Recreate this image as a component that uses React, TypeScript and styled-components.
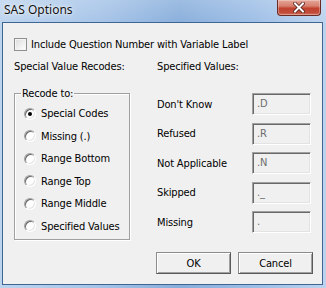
import React from "react";
import styled, { createGlobalStyle } from "styled-components";

const GlobalStyle = createGlobalStyle`
  html, body { margin: 0; padding: 0; }
  body { width: 326px; height: 288px; overflow: hidden; background: #fff; }
  *, *::before, *::after { box-sizing: border-box; }
`;

const UI_FONT = `"DejaVu Sans Condensed", "Liberation Sans", sans-serif`;

const Window = styled.div`
  width: 326px;
  height: 288px;
  display: flex;
  flex-direction: column;
  padding: 0 3px 3px 2px;
  background:
    linear-gradient(to bottom, rgba(255, 255, 255, 0.18), rgba(255, 255, 255, 0) 26px),
    linear-gradient(to right, #bdd4ee 0%, #a6c4e8 30%, #88aedb 55%, #9dbee6 78%, #bcd3ee 100%);
  font-family: ${UI_FONT};
  font-size: 11px;
  letter-spacing: -0.15px;
  color: #000;
`;

const TitleBar = styled.div`
  height: 22px;
  flex: none;
  display: flex;
  align-items: flex-start;
  justify-content: space-between;
`;

const Title = styled.span`
  font-family: "Noto Sans", "Liberation Sans", sans-serif;
  font-size: 12px;
  letter-spacing: 0;
  line-height: 16px;
  padding: 2px 0 0 2px;
  color: #111;
  text-shadow: 0 0 6px rgba(255, 255, 255, 0.9), 0 0 2px rgba(255, 255, 255, 0.9);
`;

const CloseButton = styled.div`
  width: 44px;
  height: 16px;
  margin-right: 2px;
  display: flex;
  align-items: center;
  justify-content: center;
  border: 1px solid #6b2a25;
  border-top: none;
  border-radius: 0 0 4px 4px;
  background: linear-gradient(#e4a597 0%, #d7806f 40%, #c2422f 55%, #c14d3c 85%, #d27a62 100%);
  box-shadow: inset 0 0 0 1px rgba(255, 255, 255, 0.3);
`;

const Client = styled.div`
  flex: 1;
  display: flex;
  flex-direction: column;
  border: 1px solid #3f6592;
  background: #f0f0f0;
  padding: 15px 9px 10px 11px;
`;

const CheckRow = styled.label`
  display: flex;
  align-items: center;
  gap: 4px;
  height: 13px;
  line-height: 13px;
  white-space: nowrap;
`;

const CheckBox = styled.span`
  width: 13px;
  height: 13px;
  flex: none;
  border: 1px solid #8f8f8f;
  background: linear-gradient(135deg, #dcdcdc, #ffffff);
  box-shadow: inset 0 0 0 1px #f4f4f4;
`;

const Columns = styled.div`
  display: grid;
  grid-template-columns: 143px 1fr;
  row-gap: 14px;
  margin-top: 9px;
  align-items: start;
`;

const SectionLabel = styled.div`
  line-height: 13px;
  white-space: nowrap;
`;

const GroupBox = styled.fieldset`
  margin: 0;
  width: 116px;
  padding: 7px 0 6px 9px;
  border: 1px solid #a0a0a0;
  box-shadow: inset 1px 1px 0 #fff, 1px 1px 0 #fff;
  display: flex;
  flex-direction: column;
  gap: 9.6px;
  min-inline-size: 0;
`;

const Legend = styled.legend`
  margin-left: -3px;
  padding: 0 1px;
  line-height: 13px;
  background: #f0f0f0;
`;

const RadioRow = styled.label`
  display: flex;
  align-items: center;
  gap: 5px;
  height: 13px;
  line-height: 13px;
  white-space: nowrap;
`;

const RadioDot = styled.span<{ $checked?: boolean }>`
  width: 12px;
  height: 12px;
  flex: none;
  border-radius: 50%;
  display: flex;
  align-items: center;
  justify-content: center;
  border: 1px solid;
  border-color: #a0a0a0 #ffffff #ffffff #a0a0a0;
  background: #fff;
  box-shadow: inset 1px 1px 0 #696969, inset -1px -1px 0 #e3e3e3;

  &::after {
    content: "";
    width: 4px;
    height: 4px;
    border-radius: 50%;
    background: #000;
    display: ${(p) => (p.$checked ? "block" : "none")};
  }
`;

const ValueGrid = styled.div`
  display: grid;
  grid-template-columns: 95px 59px;
  row-gap: 7.5px;
  align-items: center;
  margin-top: 6px;
`;

const ValueLabel = styled.span`
  line-height: 13px;
  white-space: nowrap;
`;

const ValueBox = styled.div`
  height: 22px;
  padding: 0 0 0 4px;
  line-height: 19px;
  color: #6d6d6d;
  background: #f0f0f0;
  border: 1px solid;
  border-color: #a0a0a0 #ffffff #ffffff #a0a0a0;
  box-shadow: inset 1px 1px 0 #696969, inset -1px -1px 0 #e3e3e3;
  white-space: nowrap;
`;

const ButtonRow = styled.div`
  margin-top: auto;
  display: flex;
  justify-content: flex-end;
  gap: 7px;
`;

const Button = styled.button`
  width: 75px;
  height: 22px;
  padding: 0;
  font-family: ${UI_FONT};
  font-size: 11px;
  letter-spacing: -0.15px;
  color: #000;
  background: #f0f0f0;
  border: 1px solid;
  border-color: #8c8c8c #5a5a5a #5a5a5a #8c8c8c;
  box-shadow: inset 1px 1px 0 #fff, inset -1px -1px 0 #a0a0a0;
`;

const radios = [
  "Special Codes",
  "Missing (.)",
  "Range Bottom",
  "Range Top",
  "Range Middle",
  "Specified Values",
];

const values: [string, string][] = [
  ["Don't Know", ".D"],
  ["Refused", ".R"],
  ["Not Applicable", ".N"],
  ["Skipped", "._"],
  ["Missing", "."],
];

const CloseGlyph = () => (
  <svg width="12" height="11" viewBox="0 0 12 11">
    <path d="M2 1.5 L10 9.5 M10 1.5 L2 9.5" stroke="#4a1c18" strokeWidth="3.6" strokeLinecap="square" />
    <path d="M2 1.5 L10 9.5 M10 1.5 L2 9.5" stroke="#ffffff" strokeWidth="2" strokeLinecap="square" />
  </svg>
);

export default function App() {
  return (
    <>
      <GlobalStyle />
      <Window>
        <TitleBar>
          <Title>SAS Options</Title>
          <CloseButton>
            <CloseGlyph />
          </CloseButton>
        </TitleBar>
        <Client>
          <CheckRow>
            <CheckBox />
            Include Question Number with Variable Label
          </CheckRow>
          <Columns>
            <SectionLabel>Special Value Recodes:</SectionLabel>
            <SectionLabel>Specified Values:</SectionLabel>
            <GroupBox>
              <Legend>Recode to:</Legend>
              {radios.map((r, i) => (
                <RadioRow key={r}>
                  <RadioDot $checked={i === 0} />
                  {r}
                </RadioRow>
              ))}
            </GroupBox>
            <ValueGrid>
              {values.map(([label, v]) => (
                <React.Fragment key={label}>
                  <ValueLabel>{label}</ValueLabel>
                  <ValueBox>{v}</ValueBox>
                </React.Fragment>
              ))}
            </ValueGrid>
          </Columns>
          <ButtonRow>
            <Button>OK</Button>
            <Button>Cancel</Button>
          </ButtonRow>
        </Client>
      </Window>
    </>
  );
}
